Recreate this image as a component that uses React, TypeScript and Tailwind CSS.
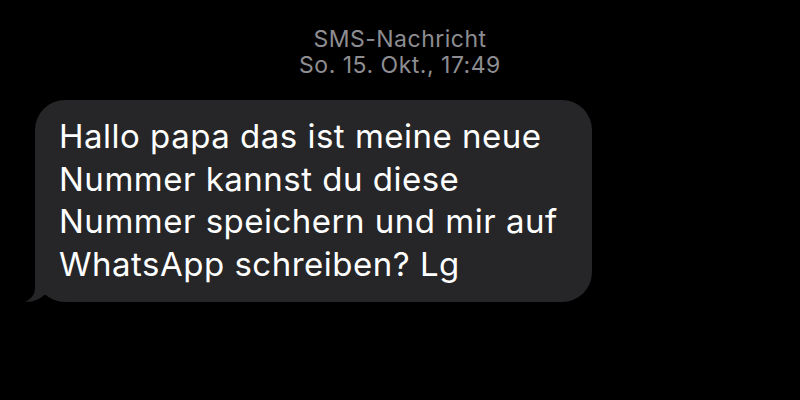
export default function App() {
  return (
    <div className="w-[800px] h-[400px] bg-black overflow-hidden" style={{ fontFamily: 'Inter, "Liberation Sans", Arial, sans-serif' }}>
      {/* Header */}
      <div className="flex flex-col items-center pt-[26px] text-[#8d8d92] text-[23px] leading-[26px] tracking-[0.5px]">
        <span>SMS-Nachricht</span>
        <span>So. 15. Okt., 17:49</span>
      </div>

      {/* Bubble */}
      <div className="relative ml-[35px] mt-[22px] w-[557px]">
        <div className="rounded-[30px] bg-[#262628] pl-[24px] pr-[20px] pt-[15px] text-white text-[33px] leading-[42.5px] tracking-[0.5px] h-[202px]">
          Hallo papa das ist meine neue
          <br />
          Nummer kannst du diese
          <br />
          Nummer speichern und mir auf
          <br />
          WhatsApp schreiben? Lg
        </div>
        <svg className="absolute left-[-11px] bottom-0" width="30" height="34" viewBox="0 0 30 34">
          <path d="M11 0 L11 20 C11 27 7 31 1 34 C10 34 16 31 20 27 L30 27 L30 0 Z" fill="#262628" />
        </svg>
      </div>
    </div>
  );
}
